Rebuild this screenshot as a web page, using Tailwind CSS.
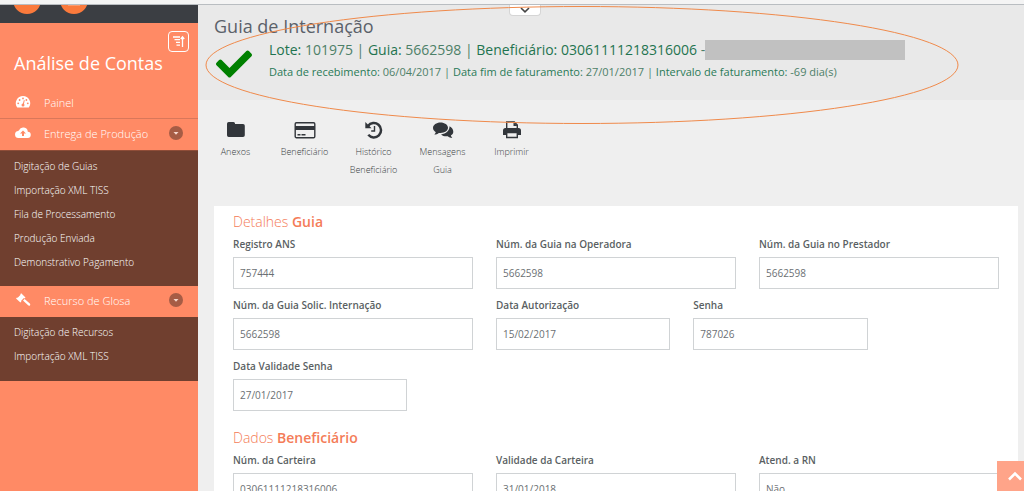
<!DOCTYPE html>
<html lang="pt-BR">
<head>
<meta charset="utf-8">
<meta name="viewport" content="width=device-width, initial-scale=1">
<title>Guia de Internação</title>
<script src="https://cdn.jsdelivr.net/npm/@tailwindcss/browser@4"></script>
</head>
<body class="h-screen overflow-hidden flex flex-col bg-[#efefef] font-['Open_Sans',sans-serif] text-[#5a5f63]">
<div class="h-1 shrink-0 bg-[#f4f4f4]"></div>
<div class="flex flex-1 min-h-0 border-t border-[#b9bdc1]">

  <aside class="w-[198px] shrink-0 bg-[#ff8a65] text-white">
    <div class="h-[18px] bg-[#3b3e43] overflow-hidden">
      <svg class="block" width="198" height="18" aria-hidden="true"><g fill="#fb7a3c"><circle cx="27" cy="-5" r="14"/><circle cx="74" cy="-5" r="14"/></g><path d="M68 0h12" stroke="#fff" stroke-width="1" opacity=".5"/></svg>
    </div>
    <div class="flex justify-end pt-2 pr-[9px]">
      <button type="button" aria-label="Recolher menu" class="size-[21px] rounded-sm border border-white flex items-center justify-center">
        <svg width="13" height="13" viewBox="0 0 13 13" fill="none" stroke="#fff" stroke-width="1.3"><path d="M1 2h7M2.5 4.7H8M4 7.4h4M4.500 10.200H8M10.500 12V2.500M8.800 4l1.700-2.200L12.200 4"/></svg>
      </button>
    </div>
    <h1 class="px-[14px] text-lg leading-[22px] whitespace-nowrap">Análise de Contas</h1>
    <nav class="pt-[15px]">
      <a href="#" class="flex items-center h-[29px] pl-[15px] text-[11px] font-light">
        <svg class="w-4 h-3.5 mb-1" viewBox="0 0 16 14"><path fill="#fff" d="M8 1a7.200 7.200 0 0 0-6.100 11c.2.400.5.600.9.600h10.400c.4 0 .7-.2.900-.6A7.200 7.200 0 0 0 8 1z"/><g fill="#ff8a65"><circle cx="3.200" cy="8.300" r=".9"/><circle cx="4.600" cy="5" r=".9"/><circle cx="8" cy="3.400" r=".9"/><circle cx="11.400" cy="5" r=".9"/><circle cx="12.800" cy="8.300" r=".9"/><circle cx="8" cy="10" r="1.500"/><path d="M7.500 10l1.400-5 .8.200-1 5z"/></g></svg>
        <span class="ml-[13px]">Painel</span>
      </a>
      <a href="#" class="flex items-center h-8 pl-[15px] pr-[15px] text-[11px] font-light border-t border-[#d9775a]">
        <svg class="w-4 h-3.5 shrink-0 mb-1" viewBox="0 0 16 14"><path fill="#fff" d="M12.800 5.800A4.600 4.600 0 0 0 4 4.300 3.300 3.300 0 0 0 3.300 5 3.500 3.500 0 0 0 3.800 12h8.700a3.100 3.100 0 0 0 .3-6.200z"/><path fill="#ff8a65" d="M8 4.500l3 3H9V10H7V7.500H5z"/></svg>
        <span class="ml-[13px] flex-1 whitespace-nowrap">Entrega de Produção</span>
        <svg class="size-3.5 mb-1" viewBox="0 0 14 14"><circle cx="7" cy="7" r="7" fill="#a65c45"/><path d="M4.500 6h5L7 8.800z" fill="#f6d9cf"/></svg>
      </a>
      <ul class="bg-[#703f2f] border-t border-[#8f4d38] h-[136px] pt-[3px] px-[14px] text-[10px] font-light leading-6 whitespace-nowrap">
        <li><a href="#">Digitação de Guias</a></li>
        <li><a href="#">Importação XML TISS</a></li>
        <li><a href="#">Fila de Processamento</a></li>
        <li><a href="#">Produção Enviada</a></li>
        <li><a href="#">Demonstrativo Pagamento</a></li>
      </ul>
      <a href="#" class="flex items-center h-[31px] pl-[15px] pr-[15px] text-[11px] font-light">
        <svg class="w-4 h-3.5 shrink-0 mb-1" viewBox="0 0 16 14" fill="#fff"><path d="M6.200.2l4.300 4.200-1 1-.6-.3-2.900 2.900.4.600-1 1L1 5.400l1-1 .7.300 2.900-2.900-.4-.6z"/><path d="M8 7.500l1.600-1.600 5.200 4.700c.6.600.6 1.300.1 1.800s-1.300.5-1.800-.1z"/></svg>
        <span class="ml-[13px] flex-1 whitespace-nowrap">Recurso de Glosa</span>
        <svg class="size-3.5 mb-1" viewBox="0 0 14 14"><circle cx="7" cy="7" r="7" fill="#a65c45"/><path d="M4.500 6h5L7 8.800z" fill="#f6d9cf"/></svg>
      </a>
      <ul class="bg-[#703f2f] h-16 pt-[3px] px-[14px] text-[10px] font-light leading-6 whitespace-nowrap">
        <li><a href="#">Digitação de Recursos</a></li>
        <li><a href="#">Importação XML TISS</a></li>
      </ul>
    </nav>
  </aside>

  <main class="relative flex-1 min-w-0">
    <header class="h-[95px] bg-[#e9e9e9] pl-4 pt-[9px]">
      <h2 class="text-lg leading-6 text-[#5b6169]">Guia de Internação</h2>
      <div class="flex pl-0.5 text-[#2f7d5b] whitespace-nowrap">
        <svg class="w-[36px] h-[36px] mt-2 mr-[17px] shrink-0" viewBox="0 0 512 512" fill="#008000"><path d="M173.898 439.404l-166.400-166.400c-9.997-9.997-9.997-26.206 0-36.204l36.203-36.204c9.997-9.998 26.207-9.998 36.204 0L192 312.690 432.095 72.596c9.997-9.997 26.207-9.997 36.204 0l36.203 36.204c9.997 9.997 9.997 26.206 0 36.204l-294.400 294.401c-9.998 9.997-26.207 9.997-36.204-.001z"/></svg>
        <div>
          <p class="flex items-center text-sm leading-6 text-[#4d8068]"><span><b class="font-medium text-[#1f7450]">Lote:</b> 101975 | <b class="font-medium text-[#1f7450]">Guia:</b> 5662598 | <b class="font-medium text-[#1f7450]">Beneficiário: 03061111218316006</b> -</span><span class="w-[200px] h-5 bg-[#c1c1c1]"></span></p>
          <p class="text-[11px] leading-5 text-[#4d8068]"><b class="font-medium text-[#2a7a57]">Data de recebimento:</b> 06/04/2017 | <b class="font-medium text-[#2a7a57]">Data fim de faturamento:</b> 27/01/2017 | <b class="font-medium text-[#2a7a57]">Intervalo de faturamento:</b> -69 dia(s)</p>
        </div>
      </div>
    </header>
    <button type="button" aria-label="Expandir" class="absolute top-0 left-[311px] w-8 h-[11px] bg-white border border-t-0 border-[#d5d5d5] rounded-b-sm flex items-center justify-center">
      <svg width="10" height="6" viewBox="0 0 10 6" fill="none" stroke="#444" stroke-width="1.600"><path d="M1 1l4 3.800L9 1"/></svg>
    </button>

    <div class="flex items-start pl-[3px] pt-5 h-[106px] text-[9px] leading-[18px] text-center text-[#3a3f44]">
      <button type="button" class="w-[69px] flex flex-col items-center gap-[3px]">
        <svg class="w-5 h-5" viewBox="0 0 20 20" fill="#32363b"><path d="M2.700 2h4.800a1.500 1.500 0 0 1 1.500 1.500V4h8a1.800 1.800 0 0 1 1.800 1.800v9.400A1.800 1.800 0 0 1 17 17H2.700A1.700 1.700 0 0 1 1 15.300V3.700A1.700 1.700 0 0 1 2.700 2z"/></svg>
        <span class="font-light">Anexos</span></button>
      <button type="button" class="w-[69px] flex flex-col items-center gap-[3px]">
        <svg class="w-[22px] h-5" viewBox="0 0 22 20"><rect x="1.200" y="2.700" width="19.600" height="15" rx="1.200" fill="none" stroke="#32363b" stroke-width="1.400"/><path d="M1 6h20v4H1zM3.500 14h3v1.400h-3zM7.500 14h4v1.400h-4z" fill="#32363b"/></svg>
        <span class="font-light">Beneficiário</span></button>
      <button type="button" class="w-[69px] flex flex-col items-center gap-[3px]">
        <svg class="w-5 h-5" viewBox="0 0 20 20"><path d="M4 6A7.200 7.200 0 1 1 4.300 14.800" fill="none" stroke="#32363b" stroke-width="2.500"/><path d="M1.300 2v6.300h6.300z" fill="#32363b"/><path d="M10.500 6v5H7.200" fill="none" stroke="#32363b" stroke-width="1.400"/></svg>
        <span class="font-light">Histórico<br>Beneficiário</span></button>
      <button type="button" class="w-[69px] flex flex-col items-center gap-[3px]">
        <svg class="w-[22px] h-5" viewBox="0 0 22 20" fill="#32363b"><path d="M8.500 2.500C4.400 2.500 1 4.900 1 8c0 1.700 1.100 3.200 2.800 4.200-.3 1-.9 1.700-1.500 2.400 1.800-.1 3.300-.8 4.500-1.700.6.100 1.100.1 1.700.1 4.100 0 7.500-2.200 7.500-5.200S12.600 2.500 8.500 2.500z"/><path d="M17.500 6.300c.2 4.200-3.400 7.700-8.500 8.100 1.300 1.200 3.200 1.900 5.300 1.900l1.500-.1c1.200.9 2.700 1.600 4.500 1.700-.6-.7-1.200-1.400-1.500-2.400 1.500-.9 2.500-2.200 2.500-3.800 0-2.200-1.500-4.200-3.800-5.400z"/></svg>
        <span class="font-light">Mensagens<br>Guia</span></button>
      <button type="button" class="w-[69px] flex flex-col items-center gap-[3px]">
        <svg class="w-5 h-5" viewBox="0 0 20 20"><path d="M1 10.500A2.500 2.500 0 0 1 3.500 8h13a2.500 2.500 0 0 1 2.500 2.500V15h-3v-2.500H4V15H1z" fill="#32363b"/><path d="M4.700 8V2h7.600l3 3v3M4.700 12.500v5h10.600v-5z" fill="none" stroke="#32363b" stroke-width="1.400"/><path d="M11.500 2v4h4z" fill="#32363b"/></svg>
        <span class="font-light">Imprimir</span></button>
    </div>

    <form class="ml-4 mr-[6px] bg-white pt-[3px] pl-[19px] pr-[19px] pb-8 text-[10px]">
      <section>
        <h3 class="text-sm leading-[25px] font-light text-[#f47c58]">Detalhes <b class="font-semibold">Guia</b></h3>
        <div class="grid grid-cols-12 gap-x-[23px] gap-y-1.5">
          <div class="col-span-4 flex flex-col gap-[3px]"><label for="ans" class="leading-5 font-semibold">Registro ANS</label><input id="ans" value="757444" class="w-full h-8 border border-[#d0d3d5] px-1.5 text-[#6b6f73]"></div>
          <div class="col-span-4 flex flex-col gap-[3px]"><label for="gop" class="leading-5 font-semibold">Núm. da Guia na Operadora</label><input id="gop" value="5662598" class="w-full h-8 border border-[#d0d3d5] px-1.5 text-[#6b6f73]"></div>
          <div class="col-span-4 flex flex-col gap-[3px]"><label for="gpr" class="leading-5 font-semibold">Núm. da Guia no Prestador</label><input id="gpr" value="5662598" class="w-full h-8 border border-[#d0d3d5] px-1.5 text-[#6b6f73]"></div>
          <div class="col-span-4 flex flex-col gap-[3px]"><label for="gsi" class="leading-5 font-semibold">Núm. da Guia Solic. Internação</label><input id="gsi" value="5662598" class="w-full h-8 border border-[#d0d3d5] px-1.5 text-[#6b6f73]"></div>
          <div class="col-span-3 flex flex-col gap-[3px]"><label for="aut" class="leading-5 font-semibold">Data Autorização</label><input id="aut" value="15/02/2017" class="w-full h-8 border border-[#d0d3d5] px-1.5 text-[#6b6f73]"></div>
          <div class="col-span-3 flex flex-col gap-[3px]"><label for="sen" class="leading-5 font-semibold">Senha</label><input id="sen" value="787026" class="w-full h-8 border border-[#d0d3d5] px-1.5 text-[#6b6f73]"></div>
          <div class="col-span-3 flex flex-col gap-[3px]"><label for="val" class="leading-5 font-semibold">Data Validade Senha</label><input id="val" value="27/01/2017" class="w-full h-8 border border-[#d0d3d5] px-1.5 text-[#6b6f73]"></div>
        </div>
      </section>
      <section class="pt-3.5">
        <h3 class="text-sm leading-[25px] font-light text-[#f47c58]">Dados <b class="font-semibold">Beneficiário</b></h3>
        <div class="grid grid-cols-12 gap-x-[23px] gap-y-1.5">
          <div class="col-span-4 flex flex-col gap-[3px]"><label for="car" class="leading-5 font-semibold">Núm. da Carteira</label><input id="car" value="03061111218316006" class="w-full h-8 border border-[#d0d3d5] px-1.5 text-[#6b6f73]"></div>
          <div class="col-span-4 flex flex-col gap-[3px]"><label for="vca" class="leading-5 font-semibold">Validade da Carteira</label><input id="vca" value="31/01/2018" class="w-full h-8 border border-[#d0d3d5] px-1.5 text-[#6b6f73]"></div>
          <div class="col-span-4 flex flex-col gap-[3px]"><label for="arn" class="leading-5 font-semibold">Atend. a RN</label><input id="arn" value="Não" class="w-full h-8 border border-[#d0d3d5] px-1.5 text-[#6b6f73]"></div>
        </div>
      </section>
    </form>

    <svg class="absolute top-0 left-[7px] pointer-events-none" width="754" height="120" viewBox="0 0 754 120" fill="none" aria-hidden="true"><ellipse cx="377" cy="60" rx="376" ry="58.500" stroke="#f08a4b"/></svg>
    <button type="button" aria-label="Voltar ao topo" class="fixed right-0 bottom-0 w-[27px] h-[30px] bg-[#ffa489] flex items-center justify-end overflow-hidden">
      <svg class="mr-0.5" width="14" height="10" viewBox="0 0 14 10" fill="none" stroke="#fff" stroke-width="2.500"><path d="M1 8.500l6-6 6 6"/></svg>
    </button>
  </main>
</div>
</body>
</html>
